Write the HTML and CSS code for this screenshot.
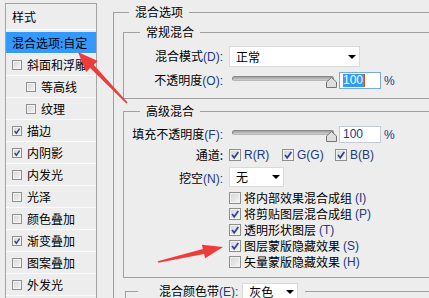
FILE: index.html
```html
<!DOCTYPE html>
<html lang="zh-CN">
<head>
<meta charset="utf-8">
<title>图层样式</title>
<link rel="stylesheet" href="styles.css">
</head>
<body>
<div class="dialog">
  <ul class="styles-list">
    <li class="head">样式</li>
    <li class="sel">混合选项:自定</li>
    <li><span class="cb"></span>斜面和浮雕</li>
    <li class="sub"><span class="cb"></span>等高线</li>
    <li class="sub"><span class="cb"></span>纹理</li>
    <li><span class="cb on"><svg viewBox="0 0 10 10"><path d="M2 5 L4.2 7.8 L8.3 2"/></svg></span>描边</li>
    <li><span class="cb on"><svg viewBox="0 0 10 10"><path d="M2 5 L4.2 7.8 L8.3 2"/></svg></span>内阴影</li>
    <li><span class="cb"></span>内发光</li>
    <li><span class="cb"></span>光泽</li>
    <li><span class="cb"></span>颜色叠加</li>
    <li><span class="cb on"><svg viewBox="0 0 10 10"><path d="M2 5 L4.2 7.8 L8.3 2"/></svg></span>渐变叠加</li>
    <li><span class="cb"></span>图案叠加</li>
    <li><span class="cb"></span>外发光</li>
  </ul>

  <div class="main">
    <fieldset class="group outer">
      <legend>混合选项</legend>

      <fieldset class="group">
        <legend class="inner-legend">常规混合</legend>
        <div class="form form-normal">
          <span class="lbl">混合模式<span class="en">(D):</span></span>
          <div class="select select-mode"><span>正常</span><i class="arrow"></i></div>
          <span class="lbl">不透明度<span class="en">(O):</span></span>
          <div class="ctrl">
            <div class="slider">
              <span class="track"></span>
              <svg class="knob" viewBox="0 0 11 11"><path d="M5.5 0.5 L10.5 5 L10.5 10.5 L0.5 10.5 L0.5 5 Z"/></svg>
            </div>
            <div class="num focus"><span class="hl">100</span><i class="caret"></i></div>
            <span class="en pct">%</span>
          </div>
        </div>
      </fieldset>

      <fieldset class="group adv">
        <legend class="inner-legend">高级混合</legend>
        <div class="form form-adv">
          <span class="lbl">填充不透明度<span class="en">(F):</span></span>
          <div class="ctrl">
            <div class="slider">
              <span class="track"></span>
              <svg class="knob" viewBox="0 0 11 11"><path d="M5.5 0.5 L10.5 5 L10.5 10.5 L0.5 10.5 L0.5 5 Z"/></svg>
            </div>
            <div class="num"><span class="en">100</span></div>
            <span class="en pct">%</span>
          </div>

          <span class="lbl">通道:</span>
          <div class="channels">
            <span class="chan"><span class="cb2 on"><svg viewBox="0 0 10 10"><path d="M2 5 L4.2 7.8 L8.3 2"/></svg></span><span class="en">R(R)</span></span>
            <span class="chan"><span class="cb2 on"><svg viewBox="0 0 10 10"><path d="M2 5 L4.2 7.8 L8.3 2"/></svg></span><span class="en">G(G)</span></span>
            <span class="chan"><span class="cb2 on"><svg viewBox="0 0 10 10"><path d="M2 5 L4.2 7.8 L8.3 2"/></svg></span><span class="en">B(B)</span></span>
          </div>

          <span class="lbl">挖空<span class="en">(N):</span></span>
          <div class="select select-knock"><span>无</span><i class="arrow"></i></div>

          <div class="opts">
            <div class="opt"><span class="cb2"></span>将内部效果混合成组<span class="en">(I)</span></div>
            <div class="opt"><span class="cb2 on"><svg viewBox="0 0 10 10"><path d="M2 5 L4.2 7.8 L8.3 2"/></svg></span>将剪贴图层混合成组<span class="en">(P)</span></div>
            <div class="opt"><span class="cb2 on"><svg viewBox="0 0 10 10"><path d="M2 5 L4.2 7.8 L8.3 2"/></svg></span>透明形状图层<span class="en">(T)</span></div>
            <div class="opt"><span class="cb2 on"><svg viewBox="0 0 10 10"><path d="M2 5 L4.2 7.8 L8.3 2"/></svg></span>图层蒙版隐藏效果<span class="en">(S)</span></div>
            <div class="opt"><span class="cb2"></span>矢量蒙版隐藏效果<span class="en">(H)</span></div>
          </div>
        </div>
      </fieldset>

      <fieldset class="group band">
        <legend class="band-legend">
          <span class="band-lbl">混合颜色带<span class="en">(E):</span></span>
          <span class="select select-band"><span>灰色</span><i class="arrow"></i></span>
        </legend>
        <div class="band-body"></div>
      </fieldset>
    </fieldset>
  </div>
</div>

<svg class="marks" viewBox="0 0 429 298" width="429" height="298">
  <polygon points="78,52 97.7,60.9 93.7,64.7 127.6,102.4 126.4,103.6 90.1,68.1 86.1,71.9"/>
  <polygon points="223,247 205.1,258.3 204.1,253.9 158.3,262.8 157.7,261.2 202.9,249.1 201.9,244.7"/>
</svg>
</body>
</html>
```

FILE: styles.css
```css
* { box-sizing: border-box; }

body {
  margin: 0;
  width: 429px;
  height: 298px;
  overflow: hidden;
  position: relative;
  background: #ededed;
  color: #000;
  font: 12px/16px "Noto Sans CJK SC", "Liberation Sans", sans-serif;
}

.en {
  font-family: "Liberation Sans", "Noto Sans CJK SC", sans-serif;
  color: #233883;
}

.dialog {
  display: flex;
  align-items: flex-start;
  padding: 3px 0 0 5px;
}

/* ---------- left styles list ---------- */
.styles-list {
  list-style: none;
  margin: 0;
  padding: 0;
  width: 92px;
  height: 300px;
  flex: none;
  border: 1px solid #a3a3a3;
}

.styles-list li {
  height: 22px;
  display: flex;
  align-items: center;
  gap: 5px;
  padding-left: 6px;
  border-bottom: 1px solid #fbfbfb;
  white-space: nowrap;
  overflow: hidden;
}

.styles-list li.head {
  height: 26px;
  border-bottom-color: #fbfbfb;
}

.styles-list li.sel {
  margin-top: 2px;
  background: #3399ff;
}

.styles-list li.sub { padding-left: 20px; }

.cb, .cb2 {
  flex: none;
  display: inline-flex;
  align-items: center;
  justify-content: center;
  border: 1px solid #8e8f8f;
  background: linear-gradient(135deg, #d3d3d3, #f7f7f7);
  box-shadow: inset 0 0 0 1px #f2f2f2;
}

.cb { width: 10px; height: 10px; }
.cb2 { width: 12px; height: 12px; }

.cb svg, .cb2 svg {
  width: 100%;
  height: 100%;
  fill: none;
  stroke: #2d4393;
  stroke-width: 1.7;
}

/* ---------- right side ---------- */
.main {
  flex: 1;
  min-width: 0;
  margin-left: 16px;
  margin-top: 1px;
}

.group {
  margin: 0;
  min-width: 0;
  border: 1px solid #a0a0a0;
  border-right: none;
  padding: 0;
}

.group legend {
  line-height: 16px;
  padding: 0 6px;
}

.outer {
  border-bottom: none;
  padding: 4px 0 0 9px;
}

.outer > legend { margin-left: 6px; }

.inner-legend { margin-left: 16px; }

.form {
  display: grid;
  grid-template-columns: 99px auto;
  column-gap: 6px;
  align-items: center;
  justify-content: start;
}

.form-normal {
  margin-top: 6px;
  padding-bottom: 9px;
  row-gap: 5px;
}

.lbl {
  text-align: right;
  white-space: nowrap;
}

.select {
  display: flex;
  align-items: center;
  justify-content: space-between;
  background: #fff;
  border: 1px solid #dadada;
  padding: 0 3px 0 6px;
}

.select-mode { width: 131px; height: 21px; }
.select-knock { width: 55px; height: 20px; }

.arrow {
  width: 0;
  height: 0;
  border-left: 4px solid transparent;
  border-right: 4px solid transparent;
  border-top: 4px solid #000;
}

.ctrl {
  display: flex;
  align-items: center;
  height: 17px;
}

.slider {
  position: relative;
  width: 107px;
  height: 17px;
  flex: none;
}

.track {
  position: absolute;
  left: 3px;
  top: 4px;
  width: 102px;
  height: 5px;
  border-radius: 3px;
  border: 1px solid #8a8a8a;
  border-bottom-color: #b8b8b8;
  background: linear-gradient(#9d9d9d, #d2d2d2);
}

.knob {
  position: absolute;
  left: 97px;
  top: 5px;
  width: 11px;
  height: 11px;
  fill: #dedede;
  stroke: #737373;
  stroke-width: 1;
}

.num {
  margin-left: 3px;
  width: 42px;
  height: 17px;
  background: #fff;
  border: 1px solid #c3cbd5;
  display: flex;
  align-items: center;
  padding-left: 3px;
  line-height: 13px;
}

.num.focus { border-color: #7aa9dc; }

.hl {
  font-family: "Liberation Sans", sans-serif;
  background: #3399ff;
  color: #fff;
  padding: 0 1px 0 0;
}

.caret {
  width: 1px;
  height: 13px;
  background: #c05a10;
}

.pct { margin-left: 3px; }

/* advanced */
.adv { margin-top: 4px; }

.form-adv {
  margin-top: 7px;
  padding-bottom: 7px;
}

.channels {
  display: flex;
  align-items: center;
  height: 12px;
  margin: 6px 0;
}

.chan {
  width: 53px;
  display: inline-flex;
  align-items: center;
  gap: 3px;
}

.select-knock { margin-bottom: 3px; }

.opts {
  grid-column: 2;
}

.opt {
  height: 16px;
  display: flex;
  align-items: center;
  gap: 3px;
  white-space: nowrap;
}

/* blend band group */
.band {
  margin: 3px 0 0 2px;
  height: 40px;
}

.band-legend {
  margin-left: 12px;
  display: flex;
  align-items: center;
  gap: 4px;
  padding: 0 7px 0 21px !important;
  height: 20px;
}

.select-band {
  width: 56px;
  height: 19px;
  margin-top: 2px;
}

/* annotation arrows */
.marks {
  position: absolute;
  left: 0;
  top: 0;
  pointer-events: none;
}

.marks polygon { fill: #ef3b3a; }
```
